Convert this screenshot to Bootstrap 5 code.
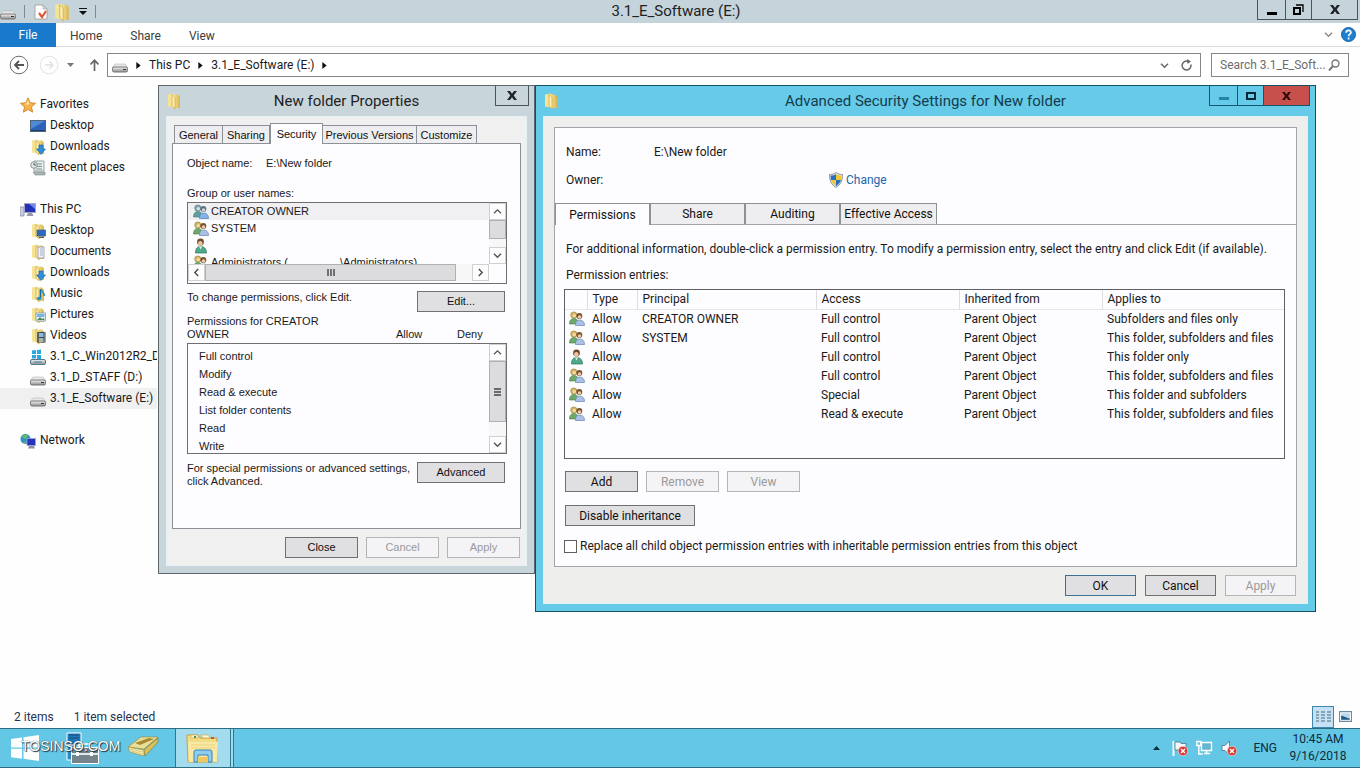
<!DOCTYPE html>
<html lang="en">
<head>
<meta charset="utf-8">
<meta name="viewport" content="width=device-width, initial-scale=1">
<title>3.1_E_Software (E:)</title>
<link href="https://cdn.jsdelivr.net/npm/bootstrap@5.3.0/dist/css/bootstrap.min.css" rel="stylesheet">
<style>
body{font-family:Roboto,"Open Sans",sans-serif;font-size:12px;line-height:16px;color:#1a1a1a;background:#fefefe;overflow:hidden}
svg{flex:none;display:block}
.btn{--bs-btn-font-size:12px;--bs-btn-line-height:16px;--bs-btn-padding-x:0;--bs-btn-padding-y:0;--bs-btn-border-radius:0;font-family:inherit}
a{color:inherit;text-decoration:none}
.i16{width:16px;height:16px}

/* Explorer frame */
.frame-title{height:23px;background:#c5d3da}
.frame-title h1{font-size:15px;line-height:23px;color:#222}
.sep{width:1px;height:13px;background:#7c8a92}
.caption{position:absolute;top:0;right:5px}
.frame-title .caption{right:2px}
.caption .btn{height:20px;border:1px solid #4a545a;border-top:0;border-left-width:0}
.caption .btn:first-child{border-left-width:1px}
.cap-min{width:29px}.cap-max{width:26px}.cap-close{width:46px}.cap-solo{width:34px}
.ribbon{height:24px;border-bottom:1px solid #dcdcdc;background:#fff}
.ribbon .nav-link{padding:5px 14px 3px;color:#3c3c3c;line-height:16px}
.ribbon .nav-link.active{background:#1979ca;color:#fff;width:56px;padding:4px 0;text-align:center}
.address{height:37px;padding:6px 11px 0 5px}
.arrows{height:24px}
.field{height:24px;border:1px solid #858585;background:#fff}
.search{width:138px;margin-left:10px}
.search input{border:0;outline:0;min-width:0;font-size:12px;background:none}
.search input::placeholder{color:#6d6d6d;opacity:1}

/* Navigation pane */
.side{width:157px;padding-top:10px;white-space:nowrap;overflow:hidden}
.side a{height:21px;line-height:21px;padding-left:30px}
.side a.root{padding-left:20px}
.side a.chosen{background:#f0f0f0}
.side ul+ul{margin-top:21px}
.status{height:23px;color:#26324f;padding-left:14px}
.viewbtn{width:22px;height:22px}
.viewbtn.on{background:#c4e2f4;border:1px solid #3f86ad}

/* Dialogs */
.dialog{position:absolute;top:1px}
.dialog .top{height:30px}
.dialog h2{font-size:15px;line-height:30px;color:#222;padding-right:16px}
.panel{background:#fdfcfe;border:1px solid #8c9097}
.cmd{height:21px;background:#e0dfe1;border:1px solid #707070;color:#111}
.cmd:disabled{background:#f4f3f5;border-color:#b5b5b5;color:#9a9a9a;opacity:1}
.tabs{--bs-nav-tabs-border-width:0;border:0}
.tabs .nav-link{border:1px solid #8c9097;border-left-width:0;border-bottom:0;border-radius:0;background:#eeedef;color:#111;padding:0}
.tabs li:first-child .nav-link{border-left-width:1px}
.tabs .nav-link.active{background:#fdfcfe;color:#111;border-color:#8c9097}
.actions{padding:8px 1px 0 0}

.props{left:158px;width:377px;background:#c8d5db;border:1px solid #5d666b;padding:0 7px 7px;font-family:"Liberation Sans",Arial,sans-serif;font-size:11px;line-height:13px}
.props h2,.secure h2{font-family:Roboto,sans-serif}
.props .btn{--bs-btn-font-size:11px;--bs-btn-line-height:13px}
.props .client{background:#f0f0f0;border:1px solid #e6f1f5;padding:7px 5px}
.props .tabs{padding-left:2px}
.props .tabs .nav-link{height:18px;line-height:16px;font-size:11px}
.props .tabs .nav-link.active{height:21px;margin:-1px 0 -1px;position:relative;border-left-width:1px}
.props .panel{padding:13px 13px 0 14px;height:386px}
.props .act{width:88px;margin-right:2px;flex:none}
.group-label{padding:17px 0 2px}
.listbox{border:1px solid #6f6f72;background:#fdfcfe}
.who{height:82px}
.who ul{height:61px;overflow:hidden}
.who li{height:17px;line-height:17px;padding-left:5px;gap:2px}
.who li.picked{background:#f0eff1}
.bar{background:#f7f7f8}
.bar .btn{background:#fdfdfe;border:1px solid #d0d0d0;width:17px;height:17px}
.thumb{background:#dcdcde;border:1px solid #b0b0b2}
.hbar{margin-right:17px}
.rights{height:111px}
.rights ul{padding-top:3px}
.rights li{height:18px;line-height:18px;padding-left:11px}
.rights .thumb{margin-bottom:14px}
.change-row{padding-top:3px}
.heads{padding:3px 0 2px}
.w73{width:73px}.w71{width:71px}.w130{width:130px}

.secure{left:535px;width:781px;background:#66cbe9;border:1px solid #15505f;padding:0 7px 7px}
.secure h2{color:#143c4b}
.secure .caption .btn{border-color:#14586c}
.secure .caption .close-red{background:#c7504c}
.secure .client{background:#eeeeed;border:1px solid #dff0ee;padding:10px 10px 7px}
.secure .panel{height:440px;border-color:#a3a4ab}
.secure .tabs{border-bottom:1px solid #a3a4ab}
.secure .tabs .nav-link{width:95px;height:21px;line-height:20px;font-size:12px;border-right-width:2px}
.secure .tabs .nav-link.active{margin-bottom:-1px;width:96px;height:22px;position:relative}
.secure .tabs li:last-child .nav-link{width:96px;border-right-width:1px}
.inset{padding:0 11px}
.entries{height:170px;border:1px solid #5f5f66;margin:0 11px 0 9px}
.entries table{table-layout:fixed;width:100%}
.entries th{font-weight:400;height:19px;border-right:1px solid #dedde0;border-bottom:1px solid #e6e5e8;padding:0 0 0 5px}
.entries th:last-child{border-right:0}
.entries td{height:19px;padding:0 0 0 5px;white-space:nowrap}
.entries td:first-child{padding-left:4px}
.c-icon{width:22px}.c-type{width:50px}.c-who{width:179px}.c-mid{width:143px}
.tick{appearance:none;width:13px;height:13px;border:1px solid #5f5f5f;background:#fff;margin:0}
.label-col{width:88px}.owner-col{width:174px}
.link-blue{color:#1c66ad;gap:2px}

/* Taskbar */
.taskbar{height:40px;background:#64c7e6;border-top:1px solid #2c6d82;border-bottom:1px solid #2c6d82;color:#0d2c39}
.taskbar .btn{--bs-btn-border-width:0}
.taskbar .task-app{width:56px;margin-left:15px;background:#a3dcef;border:1px solid #2f7890;border-width:0 1px;box-shadow:2px 0 #a3dcef,3px 0 #2f7890}
.watermark{position:absolute;left:21px;top:8px;font:14px/18px "Liberation Sans",Arial,sans-serif;color:#fff;text-shadow:1px 1px 1px #1c3440,0 0 1px #1c3440}
.tray{gap:8px;padding-right:9px}
.clock{line-height:17px;width:66px}
</style>
</head>
<body class="d-flex flex-column vh-100">

<svg width="0" height="0" class="position-absolute" aria-hidden="true">
<defs>
<linearGradient id="gold" x1="0" x2="1"><stop offset="0" stop-color="#f7e9a4"/><stop offset="1" stop-color="#d8b44c"/></linearGradient>
<linearGradient id="steel" x1="0" x2="0" y1="0" y2="1"><stop offset="0" stop-color="#f4f4f4"/><stop offset="1" stop-color="#8b8b8d"/></linearGradient>
<symbol id="folder" viewBox="0 0 16 16"><path d="M2 1.500l6-1v14l-6-1z" fill="#f5e493"/><path d="M7 1.500h5l2 2v11.500H8z" fill="url(#gold)"/><path d="M6 1.500l3 3v11.500L6 13z" fill="#fbf0bb" stroke="#cfa53a" stroke-width=".7"/></symbol>
<symbol id="drive" viewBox="0 0 16 16"><path d="M3 7h10l3 4H0z" fill="#e9e9ea" stroke="#aaa" stroke-width=".5"/><rect x=".5" y="10" width="15" height="5" rx="1.5" fill="url(#steel)" stroke="#77777a"/><path d="M11 12.500h3" stroke="#333"/></symbol>
<symbol id="osdrive" viewBox="0 0 16 16"><path d="M2 1.500l4-.5v4H2zM7 1l4-.5V5H7zM2 6h4v3.500H2zM7 6h4v4H7z" fill="#29a9dc"/><rect x=".5" y="10.500" width="15" height="5" rx="1.500" fill="url(#steel)" stroke="#557c8c"/><path d="M4 13h8" stroke="#2d88a8"/></symbol>
<symbol id="star" viewBox="0 0 16 16"><path d="M8 .8l2.200 4.900 5.300.6-4 3.600 1.100 5.300L8 12.500l-4.600 2.700 1.100-5.300-4-3.600 5.300-.6z" fill="#f9b24a" stroke="#c67e1f" stroke-width=".8"/><path d="M8 3l1.300 3.500L8 8 4 7l2.700-.7z" fill="#fde6a8"/></symbol>
<symbol id="screen" viewBox="0 0 16 16"><rect x=".5" y="2.500" width="15" height="11" fill="#2c62b8" stroke="#4f6478"/><path d="M1 3h14L1 11z" fill="#5089d4"/><path d="M1 12.500h14" stroke="#1c3d70"/></symbol>
<symbol id="down" viewBox="0 0 16 16"><use href="#folder"/><path d="M9 6h4v4h2.500L11 15.500 6.500 10H9z" fill="#2f8fd8" stroke="#1a5f9c" stroke-width=".6"/></symbol>
<symbol id="recent" viewBox="0 0 16 16"><path d="M4 1h10v10H4z" fill="#e9efef" stroke="#95a3a3"/><path d="M6 4h6M6 6.500h6M6 9h6" stroke="#7d9090"/><circle cx="4" cy="5" r="3.300" fill="#dfe9e7" stroke="#86979a"/><path d="M4 3v2h2" stroke="#555" fill="none"/><path d="M3 12h12v3H5z" fill="#a8b7b3" stroke="#7c8c88" stroke-width=".6"/></symbol>
<symbol id="pc" viewBox="0 0 16 16"><rect x="0" y="5" width="4" height="9" fill="#c9cbe0" stroke="#8083a5" stroke-width=".7"/><rect x="4.500" y="1.500" width="11" height="9" fill="#2231b8" stroke="#a4a6c4"/><path d="M9 2h6v5z" fill="#6f86ea"/><path d="M8 11h4l1.500 3h-7z" fill="#9698a8"/></symbol>
<symbol id="fdesk" viewBox="0 0 16 16"><use href="#folder"/><rect x="7" y="7" width="8.500" height="6" fill="#2a6ac0" stroke="#465a70" stroke-width=".7"/><path d="M9 14.500h5" stroke="#456"/></symbol>
<symbol id="fdoc" viewBox="0 0 16 16"><use href="#folder"/><path d="M8 3h6v11H8z" fill="#f2f4fa" stroke="#8b87a0" stroke-width=".7"/><path d="M10 5h3M10 7h3M10 9h3M10 11h3" stroke="#8690b5" stroke-width=".7"/></symbol>
<symbol id="fmus" viewBox="0 0 16 16"><use href="#folder"/><path d="M10.500 3v9" stroke="#176f9c" stroke-width="1.500"/><path d="M11 3c0 3 4 3 3 7" fill="none" stroke="#2590c6" stroke-width="1.500"/><ellipse cx="9" cy="12.500" rx="2.300" ry="1.800" fill="#2590c6"/></symbol>
<symbol id="fpic" viewBox="0 0 16 16"><use href="#folder"/><rect x="6" y="6" width="9.500" height="8" fill="#e9f2f8" stroke="#7c90a0" stroke-width=".7"/><path d="M7 7h7.500v3H7z" fill="#75b5df"/><path d="M7 13l3-3 2 2 2-1 .5 2z" fill="#4a8c56"/></symbol>
<symbol id="fvid" viewBox="0 0 16 16"><use href="#folder"/><rect x="7" y="4" width="8.500" height="10.500" fill="#3c4458"/><rect x="9" y="5" width="4.500" height="4" fill="#8dbbd6"/><rect x="9" y="10" width="4.500" height="4" fill="#a9b8a2"/><path d="M8 4.500v10M14.600 4.500v10" stroke="#ddd" stroke-dasharray="1 1" stroke-width=".8"/></symbol>
<symbol id="net" viewBox="0 0 16 16"><circle cx="5.500" cy="6" r="5" fill="#2d8fc9"/><path d="M2 4c2-3 5-3 6-1L5 6zM3 8l3 1-1 2z" fill="#66bd62"/><rect x="7" y="5.500" width="8.500" height="7" fill="#2433b8" stroke="#a4a6c4" stroke-width=".8"/><path d="M9 13h5l1 2.500H8z" fill="#8d90a5"/></symbol>
<symbol id="group" viewBox="0 0 16 16"><circle cx="4.800" cy="4" r="3.100" fill="#d6b65a" stroke="#8d7a35" stroke-width=".6"/><circle cx="5.300" cy="4.800" r="1.700" fill="#f4d9ad"/><path d="M.5 13c0-4 2-5.500 4.500-5.500S9 9 9 13z" fill="#6da96a" stroke="#467d48" stroke-width=".6"/><circle cx="10.300" cy="5" r="3" fill="#7a5130"/><circle cx="10.500" cy="6" r="1.800" fill="#f0c8a0"/><path d="M6.500 14.500c0-4 1.500-5.500 4-5.500s5 1.500 5 5.500z" fill="#a9c1e4" stroke="#6885b3" stroke-width=".7"/></symbol>
<symbol id="groupb" viewBox="0 0 16 16"><circle cx="4.800" cy="4" r="3.100" fill="#7fa3a5" stroke="#4f7684" stroke-width=".6"/><circle cx="5.300" cy="4.800" r="1.700" fill="#d7e2e0"/><path d="M.5 13c0-4 2-5.500 4.500-5.500S9 9 9 13z" fill="#5c9f97" stroke="#3d7a80" stroke-width=".6"/><circle cx="10.300" cy="5" r="3" fill="#5b6f80"/><circle cx="10.500" cy="6" r="1.800" fill="#ccd6dd"/><path d="M6.500 14.500c0-4 1.500-5.500 4-5.500s5 1.500 5 5.500z" fill="#86b4ea" stroke="#4a7fc0" stroke-width=".7"/></symbol>
<symbol id="person" viewBox="0 0 16 16"><circle cx="7.500" cy="4" r="3.400" fill="#6b4a30"/><circle cx="7.300" cy="5.200" r="2.200" fill="#efc49b"/><path d="M2.500 15c0-5 2-6.500 5-6.500s6 1.500 6 6.500z" fill="#4fa888" stroke="#2d7a5f" stroke-width=".7"/><path d="M6 8.500h3l-1.500 3z" fill="#f3f3ee"/></symbol>
<symbol id="shield" viewBox="0 0 16 16"><path d="M8 .5c2 1.500 4 2 6.500 2 0 6-1.500 10-6.500 13C3 12.500 1.500 8.500 1.500 2.500c2.500 0 4.500-.5 6.500-2z" fill="#dfe5ea" stroke="#77838f" stroke-width=".8"/><path d="M8 2.200V8H3C2.700 6.500 2.600 5 2.600 3.600 5 3.500 6.500 3 8 2.200z" fill="#2b6fc2"/><path d="M8 2.200V8h5c.3-1.500.4-3 .4-4.400C11 3.500 9.500 3 8 2.200zM8 8v6.200C5.200 12.400 3.700 10.500 3 8z" fill="#f0c734"/><path d="M8 8v6.200c2.800-1.800 4.300-3.700 5-6.200z" fill="#2b6fc2"/></symbol>
<symbol id="up" viewBox="0 0 9 9"><path d="M1 6.200l3.500-3.400L8 6.200" fill="none" stroke="#555" stroke-width="1.300"/></symbol>
<symbol id="dn" viewBox="0 0 9 9"><path d="M1 2.800l3.500 3.400L8 2.800" fill="none" stroke="currentColor" stroke-width="1.500"/></symbol>
<symbol id="lf" viewBox="0 0 9 9"><path d="M6.200 1L2.800 4.500 6.200 8" fill="none" stroke="#444" stroke-width="1.300"/></symbol>
<symbol id="rt" viewBox="0 0 9 9"><path d="M2.800 1l3.400 3.500L2.800 8" fill="none" stroke="#444" stroke-width="1.300"/></symbol>
<symbol id="tri" viewBox="0 0 5 8"><path d="M0 0l5 4-5 4z" fill="#111"/></symbol>
<symbol id="x" viewBox="0 0 10 9"><path d="M0 0h3l2 2.700L7 0h3L6.700 4.500 10 9H7L5 6.200 3 9H0l3.300-4.500z" fill="currentColor"/></symbol>
<symbol id="redx" viewBox="0 0 9 9"><circle cx="4.500" cy="4.500" r="4.300" fill="#d8392f" stroke="#fff" stroke-width=".5"/><path d="M2.700 2.700l3.600 3.600M6.300 2.700L2.700 6.300" stroke="#fff" stroke-width="1.300"/></symbol>
</defs>
</svg>

<header class="frame-title position-relative d-flex align-items-center flex-shrink-0">
  <svg width="16" height="16"><use href="#drive"/></svg>
  <span class="sep ms-2"></span>
  <svg class="ms-2" width="16" height="16" viewBox="0 0 16 16"><path d="M2 1h8l4 4v10H2z" fill="#fff" stroke="#999" stroke-width=".8"/><path d="M10 1v4h4z" fill="#ddd" stroke="#999" stroke-width=".6"/><path d="M6 9l3 4 4-6" fill="none" stroke="#e0563c" stroke-width="2.200"/></svg>
  <svg class="ms-1" width="18" height="18" viewBox="0 0 16 16"><use href="#folder"/></svg>
  <svg class="ms-2" width="8" height="7" viewBox="0 0 8 7"><path d="M0 0h8v1H0zM0 3h8L4 7z" fill="#111"/></svg>
  <span class="sep ms-2"></span>
  <h1 class="position-absolute start-0 end-0 text-center m-0 fw-normal pe-2">3.1_E_Software (E:)</h1>
  <div class="caption d-flex">
    <button class="btn cap-min d-flex align-items-center justify-content-center" aria-label="Minimize"><svg width="10" height="10" viewBox="0 0 10 10"><path d="M0 7h10v3H0z"/></svg></button>
    <button class="btn cap-max d-flex align-items-center justify-content-center" aria-label="Restore"><svg width="11" height="11" viewBox="0 0 11 11"><path d="M1 4h6v6H1z" fill="none" stroke="#000" stroke-width="2"/><path d="M3 1h7v7" fill="none" stroke="#000" stroke-width="1.300"/></svg></button>
    <button class="btn cap-close d-flex align-items-center justify-content-center" aria-label="Close"><svg width="10" height="9"><use href="#x"/></svg></button>
  </div>
</header>

<nav class="ribbon d-flex align-items-center flex-shrink-0">
  <ul class="nav flex-grow-1">
    <li><a class="nav-link active" href="#">File</a></li>
    <li><a class="nav-link" href="#">Home</a></li>
    <li><a class="nav-link" href="#">Share</a></li>
    <li><a class="nav-link" href="#">View</a></li>
  </ul>
  <svg width="9" height="9" style="color:#8a8a8a"><use href="#dn"/></svg>
  <svg class="ms-2 me-1" width="15" height="15" viewBox="0 0 15 15"><circle cx="7.500" cy="7.500" r="7" fill="#1f7fd0" stroke="#1763a8"/><path d="M5.200 5.700c0-3 4.700-3 4.700-.3 0 1.800-2.300 1.800-2.300 3.800M7.600 10.500v2" fill="none" stroke="#fff" stroke-width="1.700"/></svg>
</nav>

<div class="address d-flex align-items-start flex-shrink-0">
  <div class="arrows d-flex align-items-center">
    <svg class="mx-1" width="20" height="20" viewBox="0 0 20 20"><circle cx="10" cy="10" r="8.800" fill="#fff" stroke="#6b6b6b"/><path d="M15 10H6M10 6l-4 4 4 4" fill="none" stroke="#555" stroke-width="1.800"/></svg>
    <svg class="ms-1" width="22" height="20" viewBox="0 0 22 20"><circle cx="12" cy="10" r="8.800" fill="none" stroke="#e2e2e2"/><path d="M8 10h8M12.500 6.500l3.500 3.500-3.500 3.500" fill="none" stroke="#e2e2e2" stroke-width="1.600"/></svg>
    <svg class="ms-2 me-3" width="7" height="4" viewBox="0 0 7 4"><path d="M0 0h7L3.500 4z" fill="#777"/></svg>
    <svg class="me-2" width="9" height="12" viewBox="0 0 9 12"><path d="M4.500 12V1M.5 5.500l4-4.300 4 4.300" fill="none" stroke="#666" stroke-width="1.700"/></svg>
  </div>
  <div class="field flex-grow-1 d-flex align-items-center px-1">
    <svg class="i16"><use href="#drive"/></svg>
    <svg class="mx-2" width="5" height="7"><use href="#tri"/></svg>
    <a href="#">This PC</a>
    <svg class="mx-2" width="5" height="7"><use href="#tri"/></svg>
    <a href="#">3.1_E_Software (E:)</a>
    <svg class="mx-2" width="5" height="7"><use href="#tri"/></svg>
    <svg class="ms-auto me-2" width="9" height="9" style="color:#666"><use href="#dn"/></svg>
    <svg class="mx-1" width="11" height="12" viewBox="0 0 11 12"><path d="M9.800 5.500A4.400 4.400 0 1 1 7.500 2.600" fill="none" stroke="#666" stroke-width="1.500"/><path d="M6 0l4 2.500L6.500 5z" fill="#666"/></svg>
  </div>
  <label class="search field d-flex align-items-center">
    <input class="flex-grow-1 ms-2 p-0" type="text" placeholder="Search 3.1_E_Soft..." aria-label="Search">
    <svg class="me-2" width="12" height="12" viewBox="0 0 12 12"><circle cx="7.500" cy="4.500" r="3.500" fill="none" stroke="#777" stroke-width="1.400"/><path d="M5 7L1 11.500" stroke="#777" stroke-width="2"/></svg>
  </label>
</div>

<main class="flex-grow-1 position-relative">
  <nav class="side">
    <ul class="list-unstyled m-0">
      <li><a class="root d-flex align-items-center gap-1" href="#"><svg class="i16"><use href="#star"/></svg>Favorites</a></li>
      <li><a class="d-flex align-items-center gap-1" href="#"><svg class="i16"><use href="#screen"/></svg>Desktop</a></li>
      <li><a class="d-flex align-items-center gap-1" href="#"><svg class="i16"><use href="#down"/></svg>Downloads</a></li>
      <li><a class="d-flex align-items-center gap-1" href="#"><svg class="i16"><use href="#recent"/></svg>Recent places</a></li>
    </ul>
    <ul class="list-unstyled mb-0">
      <li><a class="root d-flex align-items-center gap-1" href="#"><svg class="i16"><use href="#pc"/></svg>This PC</a></li>
      <li><a class="d-flex align-items-center gap-1" href="#"><svg class="i16"><use href="#fdesk"/></svg>Desktop</a></li>
      <li><a class="d-flex align-items-center gap-1" href="#"><svg class="i16"><use href="#fdoc"/></svg>Documents</a></li>
      <li><a class="d-flex align-items-center gap-1" href="#"><svg class="i16"><use href="#down"/></svg>Downloads</a></li>
      <li><a class="d-flex align-items-center gap-1" href="#"><svg class="i16"><use href="#fmus"/></svg>Music</a></li>
      <li><a class="d-flex align-items-center gap-1" href="#"><svg class="i16"><use href="#fpic"/></svg>Pictures</a></li>
      <li><a class="d-flex align-items-center gap-1" href="#"><svg class="i16"><use href="#fvid"/></svg>Videos</a></li>
      <li><a class="d-flex align-items-center gap-1" href="#"><svg class="i16"><use href="#osdrive"/></svg>3.1_C_Win2012R2_DC</a></li>
      <li><a class="d-flex align-items-center gap-1" href="#"><svg class="i16"><use href="#drive"/></svg>3.1_D_STAFF (D:)</a></li>
      <li><a class="chosen d-flex align-items-center gap-1" href="#"><svg class="i16"><use href="#drive"/></svg>3.1_E_Software (E:)</a></li>
    </ul>
    <ul class="list-unstyled mb-0">
      <li><a class="root d-flex align-items-center gap-1" href="#"><svg class="i16"><use href="#net"/></svg>Network</a></li>
    </ul>
  </nav>

  <section class="dialog props" aria-label="New folder Properties">
    <div class="top d-flex align-items-center">
      <svg class="i16"><use href="#folder"/></svg>
      <h2 class="flex-grow-1 text-center m-0 fw-normal">New folder Properties</h2>
      <div class="caption d-flex"><button class="btn cap-solo d-flex align-items-center justify-content-center" aria-label="Close"><svg width="10" height="9"><use href="#x"/></svg></button></div>
    </div>
    <div class="client">
      <ul class="nav nav-tabs tabs flex-nowrap align-items-end">
        <li><button class="nav-link" style="width:49px">General</button></li>
        <li><button class="nav-link" style="width:47px">Sharing</button></li>
        <li><button class="nav-link active" style="width:53px">Security</button></li>
        <li><button class="nav-link text-nowrap" style="width:94px">Previous Versions</button></li>
        <li><button class="nav-link" style="width:60px">Customize</button></li>
      </ul>
      <div class="panel">
        <div class="d-flex"><span style="width:79px">Object name:</span><span>E:\New folder</span></div>
        <div class="group-label">Group or user names:</div>
        <div class="listbox who">
          <div class="d-flex">
            <ul class="list-unstyled m-0 flex-grow-1">
              <li class="picked d-flex align-items-center"><svg class="i16"><use href="#groupb"/></svg>CREATOR OWNER</li>
              <li class="d-flex align-items-center"><svg class="i16"><use href="#group"/></svg>SYSTEM</li>
              <li class="d-flex align-items-center"><svg class="i16"><use href="#person"/></svg></li>
              <li class="d-flex align-items-center"><svg class="i16"><use href="#group"/></svg>Administrators (<span class="px-4"></span>\Administrators)</li>
            </ul>
            <div class="bar d-flex flex-column">
              <button class="btn d-flex align-items-center justify-content-center" aria-label="Scroll up"><svg width="9" height="9"><use href="#up"/></svg></button>
              <div class="thumb flex-grow-1 mb-2"></div>
              <button class="btn d-flex align-items-center justify-content-center" aria-label="Scroll down"><svg width="9" height="9" style="color:#555"><use href="#dn"/></svg></button>
            </div>
          </div>
          <div class="bar hbar d-flex">
            <button class="btn d-flex align-items-center justify-content-center" aria-label="Scroll left"><svg width="9" height="9"><use href="#lf"/></svg></button>
            <div class="thumb flex-grow-1 me-3 d-flex align-items-center justify-content-center"><svg width="8" height="7" viewBox="0 0 8 7"><path d="M1 0v7M4 0v7M7 0v7" stroke="#444" stroke-width="1.400"/></svg></div>
            <button class="btn d-flex align-items-center justify-content-center" aria-label="Scroll right"><svg width="9" height="9"><use href="#rt"/></svg></button>
          </div>
        </div>
        <div class="change-row d-flex justify-content-between">
          <span class="pt-1">To change permissions, click Edit.</span>
          <button class="btn cmd act mt-1">Edit...</button>
        </div>
        <div class="heads d-flex align-items-end">
          <span style="width:209px">Permissions for CREATOR<br>OWNER</span><span style="width:61px">Allow</span><span>Deny</span>
        </div>
        <div class="listbox rights d-flex">
          <ul class="list-unstyled m-0 flex-grow-1 overflow-hidden">
            <li>Full control</li><li>Modify</li><li>Read &amp; execute</li><li>List folder contents</li><li>Read</li><li>Write</li>
          </ul>
          <div class="bar d-flex flex-column">
            <button class="btn d-flex align-items-center justify-content-center" aria-label="Scroll up"><svg width="9" height="9"><use href="#up"/></svg></button>
            <div class="thumb d-flex align-items-center justify-content-center flex-grow-1"><svg width="7" height="8" viewBox="0 0 7 8"><path d="M0 1h7M0 4h7M0 7h7" stroke="#444" stroke-width="1.400"/></svg></div>
            <button class="btn d-flex align-items-center justify-content-center" aria-label="Scroll down"><svg width="9" height="9" style="color:#555"><use href="#dn"/></svg></button>
          </div>
        </div>
        <div class="d-flex justify-content-between pt-2">
          <span class="text-nowrap">For special permissions or advanced settings,<br>click Advanced.</span>
          <button class="btn cmd act">Advanced</button>
        </div>
      </div>
      <div class="actions d-flex justify-content-end gap-2">
        <button class="btn cmd w73">Close</button><button class="btn cmd w73" disabled>Cancel</button><button class="btn cmd w73" disabled>Apply</button>
      </div>
    </div>
  </section>

  <section class="dialog secure" aria-label="Advanced Security Settings for New folder">
    <div class="top d-flex align-items-center">
      <svg class="i16"><use href="#folder"/></svg>
      <h2 class="flex-grow-1 text-center m-0 fw-normal">Advanced Security Settings for New folder</h2>
      <div class="caption d-flex">
        <button class="btn cap-min d-flex align-items-center justify-content-center" aria-label="Minimize"><svg width="10" height="10" viewBox="0 0 10 10"><path d="M0 6h10v3H0z" fill="#2683a4"/></svg></button>
        <button class="btn cap-max d-flex align-items-center justify-content-center" aria-label="Maximize"><svg width="10" height="8" viewBox="0 0 10 8"><path d="M1 1h8v6H1z" fill="none" stroke="#0a2a3a" stroke-width="2"/></svg></button>
        <button class="btn cap-close close-red d-flex align-items-center justify-content-center" aria-label="Close"><svg width="9" height="8" style="color:#2a0d0c"><use href="#x"/></svg></button>
      </div>
    </div>
    <div class="client">
      <div class="panel">
        <div class="inset d-flex mt-3"><span class="label-col">Name:</span><span>E:\New folder</span></div>
        <div class="inset d-flex" style="margin:12px 0 15px"><span class="label-col">Owner:</span><span class="owner-col"></span><a class="link-blue d-flex" href="#"><svg class="i16"><use href="#shield"/></svg>Change</a></div>
        <ul class="nav nav-tabs tabs flex-nowrap">
          <li><button class="nav-link active">Permissions</button></li>
          <li><button class="nav-link">Share</button></li>
          <li><button class="nav-link">Auditing</button></li>
          <li><button class="nav-link text-nowrap">Effective Access</button></li>
        </ul>
        <div class="inset pt-3">For additional information, double-click a permission entry. To modify a permission entry, select the entry and click Edit (if available).</div>
        <div class="inset" style="margin:10px 0 6px">Permission entries:</div>
        <div class="entries">
          <table>
            <colgroup><col class="c-icon"><col class="c-type"><col class="c-who"><col class="c-mid"><col class="c-mid"><col></colgroup>
            <thead><tr><th></th><th>Type</th><th>Principal</th><th>Access</th><th>Inherited from</th><th>Applies to</th></tr></thead>
            <tbody>
              <tr><td><svg class="i16"><use href="#group"/></svg></td><td>Allow</td><td>CREATOR OWNER</td><td>Full control</td><td>Parent Object</td><td>Subfolders and files only</td></tr>
              <tr><td><svg class="i16"><use href="#group"/></svg></td><td>Allow</td><td>SYSTEM</td><td>Full control</td><td>Parent Object</td><td>This folder, subfolders and files</td></tr>
              <tr><td><svg class="i16"><use href="#person"/></svg></td><td>Allow</td><td></td><td>Full control</td><td>Parent Object</td><td>This folder only</td></tr>
              <tr><td><svg class="i16"><use href="#group"/></svg></td><td>Allow</td><td></td><td>Full control</td><td>Parent Object</td><td>This folder, subfolders and files</td></tr>
              <tr><td><svg class="i16"><use href="#group"/></svg></td><td>Allow</td><td></td><td>Special</td><td>Parent Object</td><td>This folder and subfolders</td></tr>
              <tr><td><svg class="i16"><use href="#group"/></svg></td><td>Allow</td><td></td><td>Read &amp; execute</td><td>Parent Object</td><td>This folder, subfolders and files</td></tr>
            </tbody>
          </table>
        </div>
        <div class="d-flex gap-2" style="margin:12px 0 0 10px">
          <button class="btn cmd w73">Add</button><button class="btn cmd w73" disabled>Remove</button><button class="btn cmd w73" disabled>View</button>
        </div>
        <button class="btn cmd w130" style="margin:13px 0 0 10px">Disable inheritance</button>
        <div class="d-flex align-items-center" style="margin:12px 0 0 9px;gap:3px"><input class="tick" type="checkbox" id="replaceAll"><label for="replaceAll">Replace all child object permission entries with inheritable permission entries from this object</label></div>
      </div>
      <div class="actions d-flex justify-content-end" style="gap:9px">
        <button class="btn cmd w71" style="border-color:#3f6f95">OK</button><button class="btn cmd w71">Cancel</button><button class="btn cmd w71" disabled>Apply</button>
      </div>
    </div>
  </section>
</main>

<div class="status d-flex align-items-center flex-shrink-0">
  <span>2 items</span><span class="ms-3 ps-1 flex-grow-1">1 item selected</span>
  <button class="btn viewbtn on d-flex align-items-center justify-content-center" aria-label="Details"><svg width="16" height="14" viewBox="0 0 16 14"><path d="M1 2h3M1 5h3M1 8h3M1 11h3M6 2h4M6 5h4M6 8h4M6 11h4M12 2h4M12 5h4M12 8h4M12 11h4" stroke="#4b6a80"/></svg></button>
  <button class="btn viewbtn d-flex align-items-center justify-content-center me-1" aria-label="Large icons"><svg width="13" height="11" viewBox="0 0 12 10"><path d="M.5.5h11v9H.5z" fill="#fff" stroke="#6d8ba5"/><path d="M2 2h8v6H2z" fill="#b5d8ee"/><path d="M2 4l8 3v1H2z" fill="#215c80"/></svg></button>
</div>

<footer class="taskbar position-relative d-flex flex-shrink-0">
  <button class="btn" style="padding:0 11px" aria-label="Start"><svg width="28" height="26" viewBox="0 0 28 26"><path d="M0 4l11-1.600v10H0zM12.500 2.200L28 0v12.400H12.500zM0 13.800h11v10L0 22.200zM12.500 13.800H28V26l-15.500-2.200z" fill="#fff"/></svg></button>
  <button class="btn ms-3" aria-label="Server Manager"><svg width="33" height="32" viewBox="0 0 33 32"><path d="M1 1h14v12H1z" fill="#1f76b8" stroke="#fff"/><path d="M3 3h10M3 6h10" stroke="#144f80"/><path d="M1 13h8v15H1z" fill="#2d8abf" stroke="#fff"/><path d="M5.500 15.500h27v16h-27z" fill="#74838c" stroke="#fff"/><path d="M6 22h26" stroke="#dfe8ec" stroke-width="2"/><path d="M10 20h3v4h-3zM24 20h3v4h-3z" fill="#fff"/><path d="M13 15v-3h12v3" fill="none" stroke="#fff" stroke-width="1.500"/></svg></button>
  <button class="btn ms-4 ps-1 pb-1" aria-label="Library"><svg width="33" height="22" viewBox="0 0 33 22"><path d="M1 12L14 2l17 0-14 12z" fill="#eadf96" stroke="#9b8331" stroke-width=".6"/><path d="M1 12l16 3v6L3 17z" fill="#f6ecb4" stroke="#9b8331" stroke-width=".6"/><path d="M17 15L31 3v4L18 21z" fill="#dcc05a" stroke="#8b7227" stroke-width=".6"/><path d="M8 8L22 3l5 1-14 6z" fill="#a78932"/><path d="M3 14l13 3M4 16l12 3" stroke="#dcc878"/></svg></button>
  <button class="btn task-app d-flex align-items-center justify-content-center" aria-label="File Explorer"><svg width="34" height="30" viewBox="0 0 34 30"><path d="M1 6V2h11l2 3h17v24H2z" fill="#f3dc83" stroke="#c6a243"/><path d="M5 2h7v3H5zM15 2h7l2 3h-7z" fill="#fff6cd" stroke="#c6a243" stroke-width=".6"/><path d="M8 4h2" stroke="#3b9b44" stroke-width="2"/><path d="M25 5h3" stroke="#d35040" stroke-width="2"/><path d="M2 9h30l-1 20H3z" fill="#f9e9a6"/><path d="M5 12h24M5 15h24" stroke="#ecd27a"/><path d="M8 29V19q0-2 2-2h14q2 0 2 2v10h-4v-7H12v7z" fill="#8fcdee" stroke="#3585b5"/><path d="M12 24h10v5H12z" fill="#f0c860"/></svg></button>
  <span class="watermark">TOSINSO.COM</span>
  <div class="tray d-flex align-items-center ms-auto">
    <svg class="me-1" width="7" height="4" viewBox="0 0 7 4"><path d="M0 4h7L3.500 0z" fill="#0d2c39"/></svg>
    <svg width="16" height="17" viewBox="0 0 16 17"><path d="M1.500 1v15" stroke="#f5f8fa" stroke-width="2"/><path d="M3 2h5l1 1.500h5V10H3z" fill="#f4f7f9" stroke="#40667a" stroke-width=".7"/><use href="#redx" x="6" y="6" width="10" height="10"/></svg>
    <svg width="17" height="16" viewBox="0 0 17 16"><path d="M5.500 2.500h10v8h-10zM8 13.500h6M10.500 11v2" fill="#64b5d2" stroke="#fff" stroke-width="1.400"/><path d="M.8 1.500h4v4h-4zM2.800 6v8h4" fill="none" stroke="#fff" stroke-width="1.400"/></svg>
    <svg width="16" height="16" viewBox="0 0 16 16"><path d="M1 5.500h3L8.500 1v14L4 10.500H1z" fill="#f3f7f9" stroke="#40667a" stroke-width=".7"/><use href="#redx" x="6" y="6" width="10" height="10"/></svg>
    <span class="ms-2">ENG</span>
    <div class="clock text-center">10:45 AM<br>9/16/2018</div>
  </div>
</footer>
<script src="https://cdn.jsdelivr.net/npm/bootstrap@5.3.0/dist/js/bootstrap.bundle.min.js"></script>
</body>
</html>
